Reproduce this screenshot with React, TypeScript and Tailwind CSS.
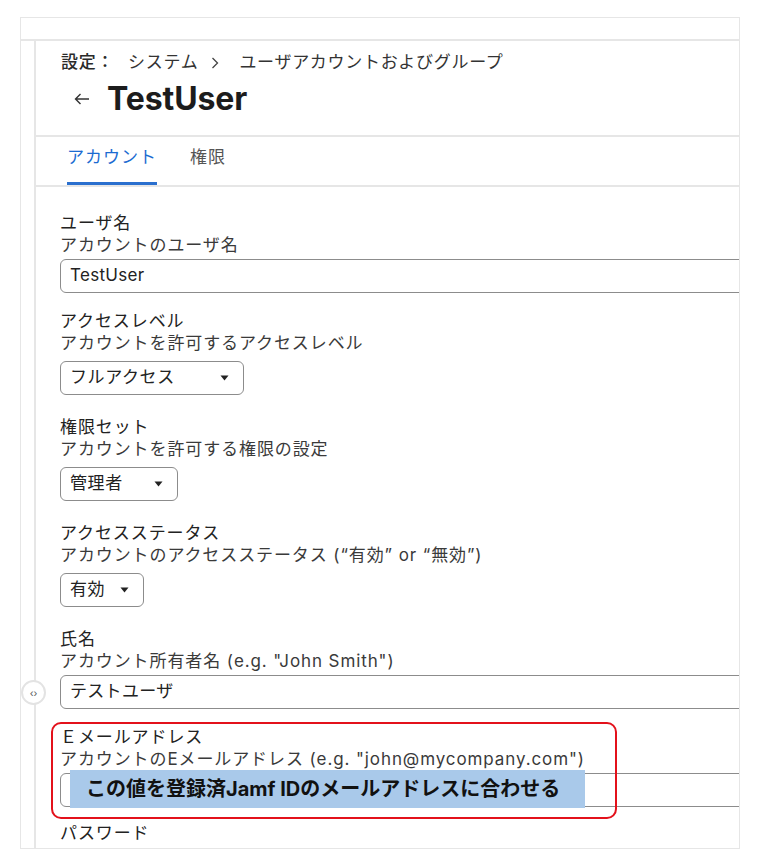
import React from "react";

const font = { fontFamily: '"Inter", "Noto Sans CJK JP", sans-serif' };

function Caret() {
  return (
    <svg width="9" height="6" viewBox="0 0 9 6" className="shrink-0">
      <path d="M0.5 0.5 L8.5 0.5 L4.5 5.5 Z" fill="#222" />
    </svg>
  );
}

function Label({ title, desc }: { title: string; desc: string }) {
  return (
    <div>
      <div className="text-[17px] leading-[22px] text-[#222] tracking-[0.9px]">{title}</div>
      <div className="text-[17px] leading-[22px] text-[#3a3a3a] tracking-[0.9px]">{desc}</div>
    </div>
  );
}

function TextInput({ value }: { value: string }) {
  return (
    <div className="mt-[3px] h-[34px] w-[720px] rounded-[6px] border-[1.5px] border-[#8c8c8c] flex items-center pl-[9px] text-[17px] text-[#222] tracking-[0.3px]">
      {value}
    </div>
  );
}

function Select({ value, width }: { value: string; width: number }) {
  return (
    <div
      className="mt-[7px] h-[34px] rounded-[6px] border-[1.5px] border-[#8c8c8c] flex items-center pl-[9px] pr-[14px] justify-between text-[17px] text-[#222] tracking-[0.6px]"
      style={{ width }}
    >
      <span>{value}</span>
      <Caret />
    </div>
  );
}

export default function App() {
  return (
    <div className="relative w-[762px] h-[864px] bg-white overflow-hidden" style={font}>
      <div className="absolute left-[20px] top-[17px] w-[720px] h-[832px] border border-[#e6e6e6] flex flex-col overflow-hidden">
        <div className="h-[23px] border-b-2 border-[#e6e6e6] shrink-0" />
        <div className="flex flex-1 min-h-0">
          <div className="w-[15px] border-r-2 border-[#e6e6e6] shrink-0" />
          <div className="flex-1 min-w-0 overflow-hidden">
            {/* header */}
            <div className="pl-[25px] pt-[11px] pb-[16px] border-b-2 border-[#e6e6e6]">
              <div className="flex items-center h-[22px] text-[17px] text-[#333] tracking-[0.7px]">
                <span className="font-medium text-[#2a2a2a]">設定：</span>
                <span className="ml-[14px]">システム</span>
                <svg width="10" height="14" viewBox="0 0 10 14" className="ml-[12px]">
                  <path d="M2.5 2 L7.5 7 L2.5 12" stroke="#444" strokeWidth="1.3" fill="none" />
                </svg>
                <span className="ml-[19px]">ユーザアカウントおよびグループ</span>
              </div>
              <div className="flex items-center h-[40px] mt-[5px]">
                <svg width="18" height="14" viewBox="0 0 18 14" className="ml-[12px]">
                  <path d="M16 7 H2.5 M7.5 2 L2.5 7 L7.5 12" stroke="#333" strokeWidth="1.4" fill="none" />
                </svg>
                <span className="ml-[16px] text-[32px] font-bold text-[#1c1c1c] tracking-[-0.1px]">TestUser</span>
              </div>
            </div>
            {/* tabs */}
            <div className="h-[50px] border-b-2 border-[#e6e6e6] flex pl-[31px] gap-[33px]">
              <div className="relative pt-[9px] text-[17px] leading-[22px] text-[#1b6bd1] tracking-[1px]">
                アカウント
                <div className="absolute left-0 right-0 bottom-0 h-[3px] bg-[#2a6fce]" />
              </div>
              <div className="pt-[9px] text-[17px] leading-[22px] text-[#555] tracking-[1px]">権限</div>
            </div>
            {/* form */}
            <div className="pl-[24px] pt-[25px]">
              <Label title="ユーザ名" desc="アカウントのユーザ名" />
              <TextInput value="TestUser" />
              <div className="h-[17px]" />
              <Label title="アクセスレベル" desc="アカウントを許可するアクセスレベル" />
              <Select value="フルアクセス" width={184} />
              <div className="h-[21px]" />
              <Label title="権限セット" desc="アカウントを許可する権限の設定" />
              <Select value="管理者" width={118} />
              <div className="h-[21px]" />
              <Label title="アクセスステータス" desc="アカウントのアクセスステータス (“有効” or “無効”)" />
              <Select value="有効" width={84} />
              <div className="h-[21px]" />
              <Label title="氏名" desc='アカウント所有者名 (e.g. "John Smith")' />
              <TextInput value="テストユーザ" />
              <div className="h-[17px]" />
              <Label title="Ｅメールアドレス" desc='アカウントのEメールアドレス (e.g. "john@mycompany.com")' />
              <TextInput value="" />
              <div className="h-[15px]" />
              <div className="text-[17px] leading-[22px] text-[#222] tracking-[0.9px]">パスワード</div>
            </div>
          </div>
        </div>
      </div>
      {/* gutter toggle */}
      <div className="absolute left-[21px] top-[680px] w-[25px] h-[25px] rounded-full border-2 border-[#e3e3e3] bg-white flex items-center justify-center text-[10px] text-[#555] leading-none">
        ‹›
      </div>
      {/* annotations */}
      <div className="absolute left-[51px] top-[722px] w-[566px] h-[97px] rounded-[10px] border-2 border-[#e3111b]" />
      <div className="absolute left-[70px] top-[770px] w-[515px] h-[38px] bg-[#a9c9ea] flex items-center pl-[16px] text-[20px] font-bold text-[#111]">
        この値を登録済Jamf IDのメールアドレスに合わせる
      </div>
    </div>
  );
}
